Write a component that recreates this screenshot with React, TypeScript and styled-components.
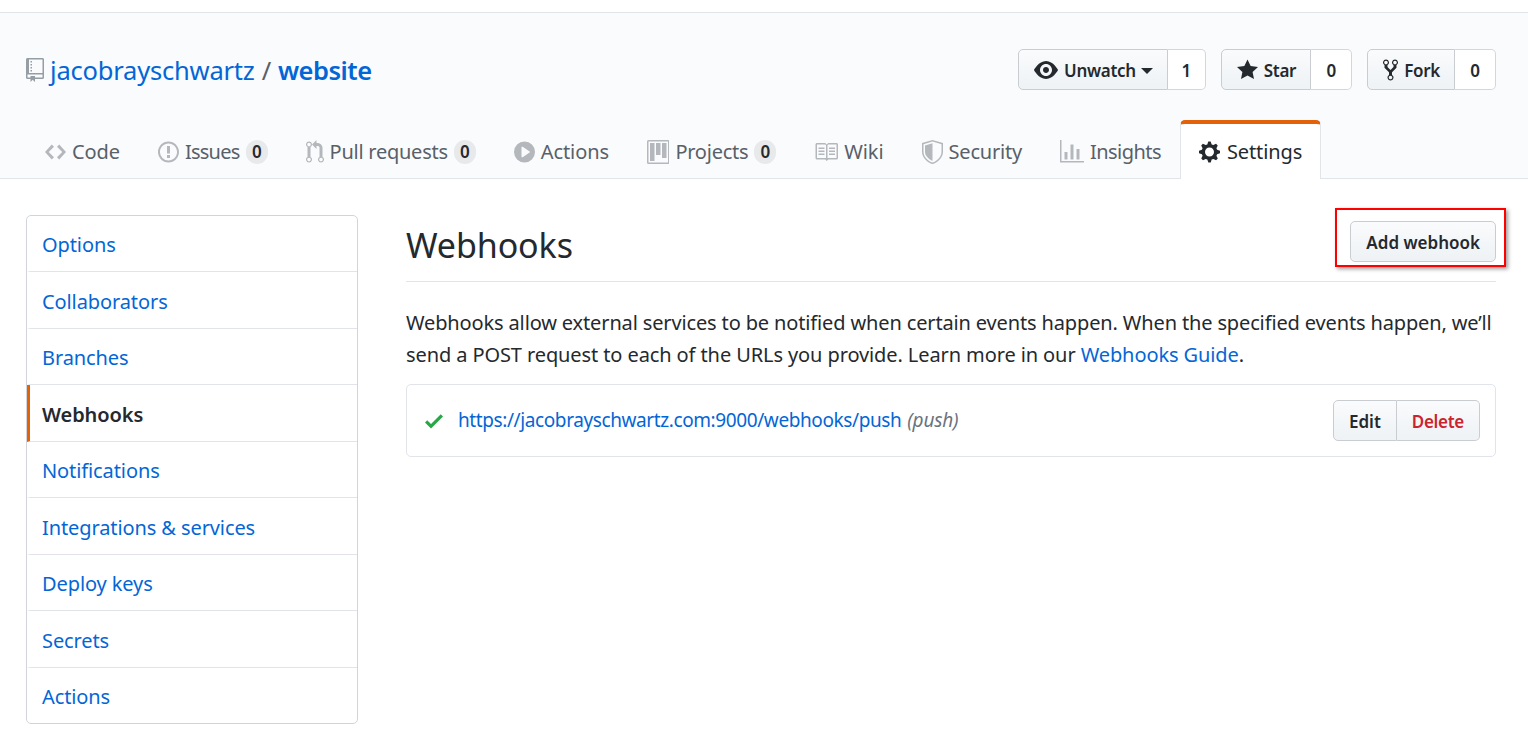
import React from "react";
import styled, { createGlobalStyle } from "styled-components";

const GlobalStyle = createGlobalStyle`
	html, body {
		margin: 0;
		padding: 0;
		background: #fff;
		color: #24292e;
		font-family: "Noto Sans", "Open Sans", sans-serif;
		font-size: 20px;
		letter-spacing: -0.1px;
	}
	* {
		box-sizing: border-box;
	}
	a {
		color: #0366d6;
		text-decoration: none;
	}
`;

const Icons: Record<string, { w: number; d: string }> = {
	repo: { w: 12, d: "M4 9H3V8h1v1zm0-3H3v1h1V6zm0-2H3v1h1V4zm0-2H3v1h1V2zm8-1v12c0 .55-.45 1-1 1H6v2l-1.5-1.5L3 16v-2H1c-.55 0-1-.45-1-1V1c0-.55.45-1 1-1h10c.55 0 1 .45 1 1zm-1 10H1v2h2v-1h3v1h5v-2zm0-10H2v9h9V1z" },
	eye: { w: 16, d: "M8.06 2C3 2 0 8 0 8s3 6 8.06 6C13 14 16 8 16 8s-3-6-7.94-6zM8 12c-2.2 0-4-1.78-4-4 0-2.2 1.8-4 4-4 2.22 0 4 1.8 4 4 0 2.22-1.78 4-4 4zm2-4c0 1.11-.89 2-2 2-1.11 0-2-.89-2-2 0-1.11.89-2 2-2 1.11 0 2 .89 2 2z" },
	star: { w: 14, d: "M14 6l-4.9-.64L7 1 4.9 5.36 0 6l3.6 3.26L2.67 14 7 11.67 11.33 14l-.93-4.74L14 6z" },
	fork: { w: 10, d: "M8 1a1.993 1.993 0 0 0-1 3.72V6L5 8 3 6V4.72A1.993 1.993 0 0 0 2 1a1.993 1.993 0 0 0-1 3.72V6.5l3 3v1.78A1.993 1.993 0 0 0 5 15a1.993 1.993 0 0 0 1-3.72V9.5l3-3V4.72A1.993 1.993 0 0 0 8 1zM2 4.2C1.34 4.2.8 3.65.8 3c0-.65.55-1.2 1.2-1.2.65 0 1.2.55 1.2 1.2 0 .65-.55 1.2-1.2 1.2zm3 10c-.66 0-1.2-.55-1.2-1.2 0-.65.55-1.2 1.2-1.2.65 0 1.2.55 1.2 1.2 0 .65-.55 1.2-1.2 1.2zm3-10c-.66 0-1.2-.55-1.2-1.2 0-.65.55-1.2 1.2-1.2.65 0 1.2.55 1.2 1.2 0 .65-.55 1.2-1.2 1.2z" },
	code: { w: 14, d: "M9.5 3L8 4.5 11.5 8 8 11.5 9.5 13 14 8 9.5 3zm-5 0L0 8l4.5 5L6 11.5 2.5 8 6 4.5 4.5 3z" },
	issue: { w: 14, d: "M7 2.3c3.14 0 5.7 2.56 5.7 5.7s-2.56 5.7-5.7 5.7A5.71 5.71 0 0 1 1.3 8c0-3.14 2.56-5.7 5.7-5.7zM7 1C3.14 1 0 4.14 0 8s3.14 7 7 7 7-3.14 7-7-3.14-7-7-7zm1 3H6v5h2V4zm0 6H6v2h2v-2z" },
	pull: { w: 12, d: "M11 11.28V5c-.03-.78-.34-1.47-.94-2.06C9.46 2.35 8.78 2.03 8 2H7V0L4 3l3 3V4h1c.27.02.48.11.69.31.21.2.3.42.31.69v6.28A1.993 1.993 0 0 0 10 15a1.993 1.993 0 0 0 1-3.72zm-1 2.92c-.66 0-1.2-.55-1.2-1.2 0-.65.55-1.2 1.2-1.2.65 0 1.2.55 1.2 1.2 0 .65-.55 1.2-1.2 1.2zM4 3c0-1.11-.89-2-2-2a1.993 1.993 0 0 0-1 3.72v6.56A1.993 1.993 0 0 0 2 15a1.993 1.993 0 0 0 1-3.72V4.72c.59-.34 1-.98 1-1.72zm-.8 10c0 .66-.55 1.2-1.2 1.2-.65 0-1.2-.55-1.2-1.2 0-.65.55-1.2 1.2-1.2.65 0 1.2.55 1.2 1.2zM2 4.2C1.34 4.2.8 3.65.8 3c0-.65.55-1.2 1.2-1.2.65 0 1.2.55 1.2 1.2 0 .65-.55 1.2-1.2 1.2z" },
	play: { w: 14, d: "M14 8A7 7 0 1 1 0 8a7 7 0 0 1 14 0zm-8.223 3.482l4.599-3.066a.5.5 0 0 0 0-.832L5.777 4.518A.5.5 0 0 0 5 4.934v6.132a.5.5 0 0 0 .777.416z" },
	project: { w: 15, d: "M10 12h3V2h-3v10zm-4-2h3V2H6v8zm-4 4h3V2H2v12zm-1 1h13V1H1v14zM14 0H1a1 1 0 0 0-1 1v14a1 1 0 0 0 1 1h13a1 1 0 0 0 1-1V1a1 1 0 0 0-1-1z" },
	book: { w: 16, d: "M3 5h4v1H3V5zm0 3h4V7H3v1zm0 2h4V9H3v1zm11-5h-4v1h4V5zm0 2h-4v1h4V7zm0 2h-4v1h4V9zm2-6v9c0 .55-.45 1-1 1H9.5l-1 1-1-1H2c-.55 0-1-.45-1-1V3c0-.55.45-1 1-1h5.5l1 1 1-1H15c.55 0 1 .45 1 1zm-8 .5L7.5 3H2v9h6V3.5zm7-.5H9.5l-.5.5V12h6V3z" },
	shield: { w: 14, d: "M7 0L0 2v6.02C0 12.69 5.31 16 7 16c1.69 0 7-3.31 7-7.98V2L7 0zM7 1.04L1 2.75v5.27C1 12.05 5.8 15 7 15c1.2 0 6-2.95 6-6.98V2.75L7 1.04zM7 2.2L2 3.6v4.4C2 11 5.6 13.4 7 13.9V2.2z" },
	graph: { w: 16, d: "M16 14v1H0V0h1v14h15zM5 13H3V8h2v5zm4 0H7V3h2v10zm4 0h-2V6h2v7z" },
	gear: { w: 14, d: "M14 8.77v-1.6l-1.94-.64-.45-1.09.88-1.84-1.13-1.13-1.81.91-1.09-.45-.69-1.92h-1.6l-.63 1.94-1.11.45-1.84-.88-1.13 1.13.91 1.81-.45 1.09L0 7.23v1.59l1.94.64.45 1.09-.88 1.84 1.13 1.13 1.81-.91 1.09.45.69 1.92h1.59l.63-1.94 1.11-.45 1.84.88 1.13-1.13-.92-1.81.47-1.09L14 8.75v.02zM7 11c-1.66 0-3-1.34-3-3s1.34-3 3-3 3 1.34 3 3-1.34 3-3 3z" },
	check: { w: 12, d: "M12 5l-8 8-4-4 1.5-1.5L4 10l6.5-6.5L12 5z" }
};

const IconSvg = styled.svg<{ $color: string }>`
	flex: none;
	display: block;
	fill: ${p => p.$color};
`;

const Icon = ({ name, color = "currentColor" }: { name: string; color?: string }) => {
	const icon = Icons[name];
	return (
		<IconSvg
			$color={color}
			width={icon.w * 1.5}
			height={24}
			viewBox={`0 0 ${icon.w} 16`}
			fillRule="evenodd"
		>
			<path d={icon.d} />
		</IconSvg>
	);
};

const Page = styled.div`
	width: 1528px;
	height: 729px;
	overflow: hidden;
	padding-top: 12px;
`;

const Header = styled.header`
	height: 167px;
	background: #fafbfc;
	border-top: 1px solid #e1e4e8;
	border-bottom: 1px solid #e1e4e8;
	display: flex;
	flex-direction: column;
	padding: 0 32px 0 26px;
`;

const RepoHead = styled.div`
	display: flex;
	align-items: flex-start;
	justify-content: space-between;
	padding-top: 36px;
	height: 106px;
`;

const RepoTitle = styled.h1`
	display: flex;
	align-items: center;
	margin: 0;
	height: 42px;
	font-size: 25.5px;
	font-weight: 400;
	color: #586069;
	gap: 6px;
	letter-spacing: -0.2px;
`;

const Slash = styled.span`
	margin: 0 7px;
`;

const StrongLink = styled.a`
	font-weight: 600;
	letter-spacing: -0.5px;
`;

const Actions = styled.div`
	display: flex;
	gap: 15px;
`;

const ActionGroup = styled.div`
	display: flex;
	height: 41px;
`;

const ActionButton = styled.button`
	display: flex;
	align-items: center;
	gap: 6px;
	height: 41px;
	padding: 2px 14px 0 15px;
	font: inherit;
	font-size: 17px;
	font-weight: 600;
	letter-spacing: -0.3px;
	color: #24292e;
	background: linear-gradient(#fafbfc, #eff3f6 90%);
	border: 1px solid #c9cdd2;
	border-radius: 5px 0 0 5px;

	svg {
		margin-top: -2px;
	}
`;

const Caret = styled.span`
	width: 0;
	height: 0;
	margin-left: -1px;
	border-top: 6px solid #24292e;
	border-left: 6px solid transparent;
	border-right: 6px solid transparent;
`;

const SocialCount = styled.a<{ $width: number }>`
	display: flex;
	align-items: center;
	justify-content: center;
	width: ${p => p.$width}px;
	padding-top: 2px;
	font-size: 17px;
	font-weight: 600;
	color: #24292e;
	background: #fff;
	border: 1px solid #d4d7da;
	border-left: 0;
	border-radius: 0 5px 5px 0;
`;

const Tabs = styled.nav`
	display: flex;
	align-items: flex-end;
	height: 60px;
	margin-bottom: -1px;
`;

const Tab = styled.a<{ $active?: boolean; $spacing: number }>`
	display: flex;
	align-items: center;
	gap: ${p => (p.$active ? 7 : 6)}px;
	height: 59px;
	padding: ${p => (p.$active ? "0 18px" : "4px 19px 0")};
	letter-spacing: ${p => p.$spacing}px;
	color: ${p => (p.$active ? "#24292e" : "#586069")};
	background: ${p => (p.$active ? "#fff" : "transparent")};
	border: solid ${p => (p.$active ? "#e1e4e8" : "transparent")};
	border-width: ${p => (p.$active ? "4px 1px 0" : "0")};
	border-top-color: ${p => (p.$active ? "#e36209" : "transparent")};
	border-radius: ${p => (p.$active ? "5px 5px 0 0" : "0")};
`;

const Counter = styled.span`
	display: inline-block;
	width: 22px;
	font-size: 17px;
	font-weight: 600;
	line-height: 24px;
	text-align: center;
	color: #24292e;
	background: rgba(27, 31, 35, 0.08);
	border-radius: 12px;
`;

const Main = styled.main`
	display: flex;
	gap: 48px;
	padding: 36px 32px 0 26px;
`;

const SideMenu = styled.nav`
	flex: none;
	width: 332px;
	height: 509px;
	background: #fff;
	border: 1px solid #d1d5da;
	border-radius: 5px;
	overflow: hidden;
`;

const SideItem = styled.a<{ $selected?: boolean }>`
	display: flex;
	align-items: center;
	height: 56.5px;
	padding: 3px 12px 0;
	color: ${p => (p.$selected ? "#24292e" : "#0366d6")};
	font-weight: ${p => (p.$selected ? 600 : 400)};
	border-bottom: 1px solid #e1e4e8;
	border-left: 3px solid ${p => (p.$selected ? "#e36209" : "transparent")};
	&:first-child {
		height: 56px;
		padding-top: 2px;
	}
	&:last-child {
		padding-top: 1px;
		border-bottom: 0;
	}
`;

const Content = styled.section`
	flex: 1;
	min-width: 0;
`;

const SubHead = styled.div`
	display: flex;
	align-items: center;
	justify-content: space-between;
	height: 67px;
	padding-bottom: 13px;
	border-bottom: 1px solid #e1e4e8;
	margin-bottom: 25px;
`;

const SubHeadTitle = styled.h2`
	margin: 0;
	padding-top: 6px;
	font-size: 34px;
	font-weight: 400;
	letter-spacing: -0.1px;
`;

const Highlight = styled.div`
	position: relative;
`;

const HighlightFrame = styled.div`
	position: absolute;
	top: -13px;
	left: -15px;
	right: -10px;
	bottom: -5px;
	border: 2px solid #ff0000;
	box-shadow: 2px 2px 4px rgba(0, 0, 0, 0.4);
	pointer-events: none;
`;

const Button = styled.button`
	display: block;
	height: 41px;
	padding: 2px 15px 0;
	font: inherit;
	font-size: 17px;
	font-weight: 600;
	letter-spacing: 0;
	color: #24292e;
	background: linear-gradient(#fafbfc, #eff3f6 90%);
	border: 1px solid #c9cdd2;
	border-radius: 5px;
`;

const Intro = styled.p`
	margin: 0 0 13px;
	font-size: 20px;
	line-height: 32px;
`;

const TightRun = styled.span`
	letter-spacing: -0.14px;
`;

const HookRow = styled.div`
	display: flex;
	align-items: center;
	height: 73px;
	padding: 0 15px 0 18px;
	border: 1px solid #e1e4e8;
	border-radius: 5px;
`;

const HookUrl = styled.a`
	margin-left: 15px;
	padding-bottom: 2px;
	font-size: 19px;
	letter-spacing: -0.4px;
`;

const HookEvent = styled.em`
	margin-left: 6px;
	padding-bottom: 2px;
	font-size: 19px;
	letter-spacing: -0.2px;
	color: #6a737d;
`;

const HookActions = styled.div`
	display: flex;
	margin-left: auto;
`;

const EditButton = styled(Button)`
	border-radius: 5px 0 0 5px;
`;

const DeleteButton = styled(Button)`
	color: #cb2431;
	letter-spacing: -0.3px;
	border-left: 0;
	border-radius: 0 5px 5px 0;
`;

const sideItems = [
	"Options",
	"Collaborators",
	"Branches",
	"Webhooks",
	"Notifications",
	"Integrations & services",
	"Deploy keys",
	"Secrets",
	"Actions"
];

const tabs = [
	{ label: "Code", icon: "code", spacing: -0.1 },
	{ label: "Issues", icon: "issue", count: 0, spacing: -0.75 },
	{ label: "Pull requests", icon: "pull", count: 0, spacing: -0.25 },
	{ label: "Actions", icon: "play", spacing: -0.1 },
	{ label: "Projects", icon: "project", count: 0, spacing: -0.25 },
	{ label: "Wiki", icon: "book", spacing: -0.1 },
	{ label: "Security", icon: "shield", spacing: -0.2 },
	{ label: "Insights", icon: "graph", spacing: -0.55 }
];

const social = [
	{ label: "Unwatch", icon: "eye", count: 1, caret: true, width: 38 },
	{ label: "Star", icon: "star", count: 0, width: 41 },
	{ label: "Fork", icon: "fork", count: 0, width: 41 }
];

export default function App() {
	return (
		<Page>
			<GlobalStyle />
			<Header>
				<RepoHead>
					<RepoTitle>
						<Icon name="repo" color="#959da5" />
						<span>
							<a href="#">jacobrayschwartz</a>
							<Slash>/</Slash>
							<StrongLink href="#">website</StrongLink>
						</span>
					</RepoTitle>
					<Actions>
						{social.map(item => (
							<ActionGroup key={item.label}>
								<ActionButton>
									<Icon name={item.icon} color="#24292e" />
									{item.label}
									{item.caret && <Caret />}
								</ActionButton>
								<SocialCount href="#" $width={item.width}>
									{item.count}
								</SocialCount>
							</ActionGroup>
						))}
					</Actions>
				</RepoHead>
				<Tabs>
					{tabs.map(tab => (
						<Tab href="#" key={tab.label} $spacing={tab.spacing}>
							<Icon name={tab.icon} color="#b4b8bc" />
							{tab.label}
							{tab.count !== undefined && <Counter>{tab.count}</Counter>}
						</Tab>
					))}
					<Tab href="#" $active $spacing={-0.1}>
						<Icon name="gear" color="#24292e" />
						Settings
					</Tab>
				</Tabs>
			</Header>
			<Main>
				<SideMenu>
					{sideItems.map(item => (
						<SideItem href="#" key={item} $selected={item === "Webhooks"}>
							{item}
						</SideItem>
					))}
				</SideMenu>
				<Content>
					<SubHead>
						<SubHeadTitle>Webhooks</SubHeadTitle>
						<Highlight>
							<Button>Add webhook</Button>
							<HighlightFrame />
						</Highlight>
					</SubHead>
					<Intro>
						<TightRun>
							Webhooks allow external services to be notified when certain
							events happen. When the specified events happen, we’ll
						</TightRun>{" "}
						send a POST request to each of the URLs you provide. Learn more in
						our <a href="#">Webhooks Guide</a>.
					</Intro>
					<HookRow>
						<Icon name="check" color="#28a745" />
						<HookUrl href="#">
							https://jacobrayschwartz.com:9000/webhooks/push
						</HookUrl>
						<HookEvent>(push)</HookEvent>
						<HookActions>
							<EditButton>Edit</EditButton>
							<DeleteButton>Delete</DeleteButton>
						</HookActions>
					</HookRow>
				</Content>
			</Main>
		</Page>
	);
}
